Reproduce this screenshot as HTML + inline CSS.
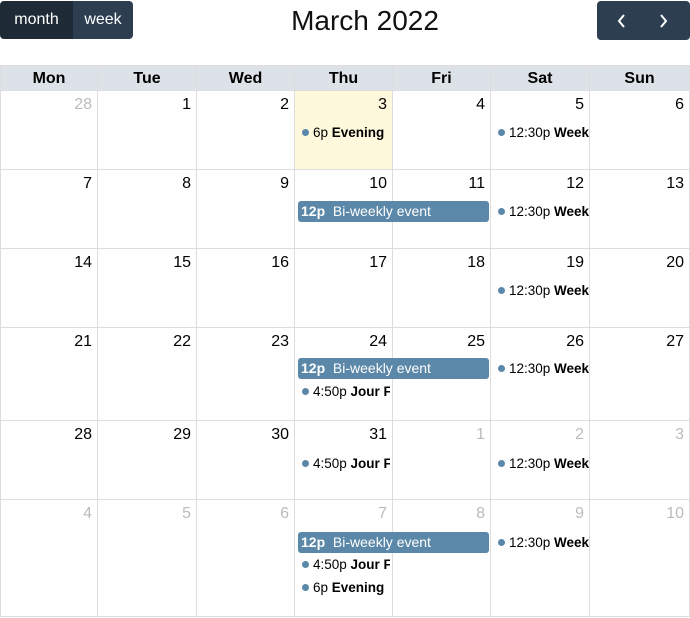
<!DOCTYPE html>
<html><head><meta charset="utf-8"><style>
*{box-sizing:border-box;margin:0;padding:0}
body{width:690px;height:618px;background:#fff;font-family:"Liberation Sans",sans-serif;position:relative;overflow:hidden;color:#000}
.btn{position:absolute;background:#2c3e50;color:#fff;font-size:16px;display:flex;align-items:center;justify-content:center}
.title{position:absolute;left:0;width:730px;top:5px;text-align:center;font-size:28px;color:#111}
.hdr{position:absolute;top:65px;height:26px;background:#dde1e8;border:1px solid #ddd;font-weight:bold;font-size:16px;text-align:center;line-height:25px}
.cell{position:absolute;border-right:1px solid #ddd;border-bottom:1px solid #ddd}
.num{position:absolute;right:5px;top:5px;font-size:16px}
.o{color:#bbb}
.dot{position:absolute;font-size:13.5px;white-space:nowrap;overflow:hidden}
.dot:before{content:"";display:inline-block;width:7px;height:7px;border-radius:50%;background:#5b87a8;margin-right:4px;vertical-align:1px}
.bar{position:absolute;left:298px;width:191px;height:21px;background:#5b87a8;color:#fff;border-radius:3px;font-size:14px;line-height:21px;padding-left:3px}
</style></head><body>
<div class="btn" style="left:0;top:1px;width:73px;height:38px;background:#1e2b37;border-radius:4px 0 0 4px">month</div>
<div class="btn" style="left:73px;top:1px;width:60px;height:38px;border-radius:0 4px 4px 0">week</div>
<div class="title">March 2022</div>
<div class="btn" style="left:597px;top:1px;width:93px;height:39px;border-radius:4px">
<svg width="93" height="39" viewBox="0 0 93 39"><path d="M27 14l-5 6 5 6M64 14l5 6-5 6" stroke="#fff" stroke-width="2" fill="none"/></svg></div>
<div id="g"></div>
<script>
var xs=[0,98,197,295,393,491,590,690],ys=[91,170,249,328,421,500,617];
var days=["Mon","Tue","Wed","Thu","Fri","Sat","Sun"],h="";
for(var i=0;i<7;i++)h+='<div class="hdr" style="left:'+xs[i]+'px;width:'+(xs[i+1]-xs[i])+'px;'+(i?'border-left:none':'')+'">'+days[i]+'</div>';
var nums=[28,1,2,3,4,5,6];var d=7;
for(var r=0;r<6;r++)for(var c=0;c<7;c++){var n,o=false;
if(r==0){n=nums[c];o=c==0}else{n=d;if(d>31){n=d-31;o=true}d++}
h+='<div class="cell" style="left:'+xs[c]+'px;top:'+ys[r]+'px;width:'+(xs[c+1]-xs[c])+'px;height:'+(ys[r+1]-ys[r])+'px;'+(c==0?'border-left:1px solid #ddd;':'')+(r==0&&c==3?'background:#fef8dd;':'')+'"><span class="num'+(o?' o':'')+'">'+n+'</span></div>';}
document.getElementById('g').innerHTML=h;
</script>
<div class="dot" style="left:302px;top:125px;width:88px">6p <b>Evening</b></div>
<div class="dot" style="left:498px;top:125px;width:91px">12:30p <b>Weekly</b></div>
<div class="bar" style="top:201px"><b>12p</b>&nbsp; Bi-weekly event</div>
<div class="dot" style="left:498px;top:204px;width:91px">12:30p <b>Weekly</b></div>
<div class="dot" style="left:498px;top:283px;width:91px">12:30p <b>Weekly</b></div>
<div class="bar" style="top:358px"><b>12p</b>&nbsp; Bi-weekly event</div>
<div class="dot" style="left:498px;top:361px;width:91px">12:30p <b>Weekly</b></div>
<div class="dot" style="left:302px;top:384px;width:88px">4:50p <b>Jour Fixe</b></div>
<div class="dot" style="left:302px;top:456px;width:88px">4:50p <b>Jour Fixe</b></div>
<div class="dot" style="left:498px;top:456px;width:91px">12:30p <b>Weekly</b></div>
<div class="bar" style="top:532px"><b>12p</b>&nbsp; Bi-weekly event</div>
<div class="dot" style="left:498px;top:535px;width:91px">12:30p <b>Weekly</b></div>
<div class="dot" style="left:302px;top:557px;width:88px">4:50p <b>Jour Fixe</b></div>
<div class="dot" style="left:302px;top:580px;width:88px">6p <b>Evening</b></div>
</body></html>
